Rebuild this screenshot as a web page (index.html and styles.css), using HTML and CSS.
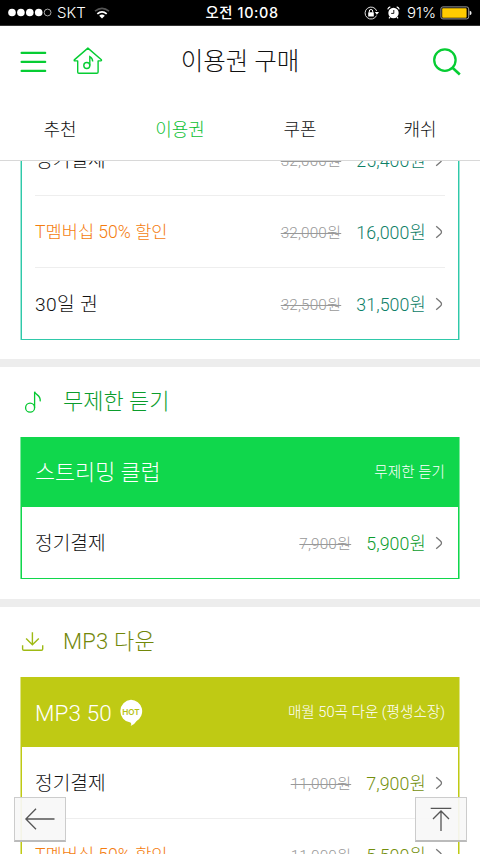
FILE: index.html
```html
<!DOCTYPE html>
<html lang="ko">
<head>
<meta charset="utf-8">
<meta name="viewport" content="width=device-width, initial-scale=1">
<title>이용권 구매</title>
<link rel="stylesheet" href="styles.css">
</head>
<body>
<svg class="defs" width="0" height="0" aria-hidden="true">
  <symbol id="chevron" viewBox="0 0 8 14"><path d="M1.2 1.2 L5.2 4.7 Q7.8 7 5.2 9.3 L1.2 12.8" fill="none" stroke="#777" stroke-width="1.3"/></symbol>
</svg>
<div class="screen">
  <div class="status">
    <div class="status-left">
      <svg width="45" height="9" viewBox="0 0 45 9"><g fill="#fff"><circle cx="4" cy="4.5" r="3.8"/><circle cx="12.9" cy="4.5" r="3.8"/><circle cx="21.8" cy="4.5" r="3.8"/><circle cx="30.7" cy="4.5" r="3.8"/></g><circle cx="39.6" cy="4.5" r="3.4" fill="none" stroke="#ccc" stroke-width=".8"/></svg>
      <span class="carrier">SKT</span>
      <svg class="wifi" width="16" height="12" viewBox="0 0 16 12"><path d="M1 4.2 Q8 -1.6 15 4.2" fill="none" stroke="#555" stroke-width="1.7"/><path d="M3.3 6.9 Q8 2.8 12.7 6.9" fill="none" stroke="#fff" stroke-width="1.8"/><path d="M5.2 8.7 Q8 6.3 10.8 8.7 L8 11.6Z" fill="#fff"/></svg>
    </div>
    <div class="clock">오전 10:08</div>
    <div class="status-right">
      <svg width="15" height="14" viewBox="0 0 15 14"><path d="M12.5 9.6 A6 6 0 1 1 12.7 5" fill="none" stroke="#ddd" stroke-width="1"/><path d="M10.8 6 H15 L12.9 8.8Z" fill="#fff"/><rect x="4.2" y="6.2" width="5.6" height="4.3" rx=".5" fill="#fff"/><path d="M5.3 6.4 V5 Q5.3 3.5 7 3.5 T8.7 5 V6.4" fill="none" stroke="#fff" stroke-width="1"/></svg>
      <svg class="alarm" width="13" height="13" viewBox="0 0 13 13"><circle cx="6.5" cy="7" r="5.2" fill="#fff"/><path d="M.7 3.4 Q1.4 1.4 3.3 .9 M12.3 3.4 Q11.6 1.4 9.7 .9 M3 11 L2 12.4 M10 11 L11 12.4" fill="none" stroke="#fff" stroke-width="1.2"/><path d="M6.8 4 V7.4 H4.2" fill="none" stroke="#000" stroke-width=".9"/></svg>
      <span class="percent">91%</span>
      <svg class="battery" width="32" height="14" viewBox="0 0 32 14"><rect x=".9" y=".9" width="27.8" height="12" rx="2" fill="#000" stroke="#999" stroke-width="1"/><rect x="2.2" y="2.2" width="24.4" height="9.6" rx=".8" fill="#fc0"/><path d="M29.7 4.7 Q31.6 5 31.6 7 T29.7 9.3Z" fill="#eee"/></svg>
    </div>
  </div>

  <header class="header">
    <div class="header-left">
      <svg width="27" height="22" viewBox="0 0 27 22"><path d="M1.6 1.9H25.2M1.6 10.9H25.2M1.6 19.9H25.2" stroke="#06cd33" stroke-width="2.2" stroke-linecap="round"/></svg>
      <svg class="home" width="30" height="28" viewBox="0 0 30 28"><path d="M14.9 1.1 L28.4 12.7 Q28.8 13.8 27.8 13.9 H25.1 V25 Q25.1 26.3 23.8 26.3 H5.9 Q4.7 26.3 4.7 25 V13.9 H1.8 Q.9 13.8 1.3 12.9Z" fill="none" stroke="#06cd33" stroke-width="1.4" stroke-linejoin="round"/><circle cx="13.8" cy="18.5" r="3" fill="none" stroke="#06cd33" stroke-width="1.4"/><path d="M16.8 18.5 V9.6 Q19.6 11.2 19.7 14.5" fill="none" stroke="#06cd33" stroke-width="1.4"/></svg>
    </div>
    <h1 class="title">이용권 구매</h1>
    <svg class="search" width="29" height="28" viewBox="0 0 29 28"><circle cx="12.9" cy="12.1" r="10.7" fill="none" stroke="#06cd33" stroke-width="2.3"/><path d="M20.5 19.7 L27.8 26.5" stroke="#06cd33" stroke-width="2.6"/></svg>
  </header>

  <nav class="tabs">
    <a class="tab">추천</a><a class="tab active">이용권</a><a class="tab">쿠폰</a><a class="tab">캐쉬</a>
  </nav>

  <main class="content">
    <section class="section teal scrolled">
      <div class="card">
        <div class="rows">
          <div class="row"><span class="name">정기결제</span><s class="old">32,000원</s><span class="price">25,400원</span><svg class="chev"><use href="#chevron"/></svg></div>
          <div class="row"><span class="name promo">T멤버십 50% 할인</span><s class="old">32,000원</s><span class="price">16,000원</span><svg class="chev"><use href="#chevron"/></svg></div>
          <div class="row"><span class="name period">30일 권</span><s class="old">32,500원</s><span class="price">31,500원</span><svg class="chev"><use href="#chevron"/></svg></div>
        </div>
      </div>
    </section>

    <section class="section green">
      <h2 class="heading">
        <svg width="24" height="26" viewBox="0 0 24 26"><circle cx="10.1" cy="18.7" r="4.5" fill="none" stroke="#06c832" stroke-width="1.3"/><path d="M14.6 18.7 V2.7 C15.3 6.1 21 5.9 20.2 12.4" fill="none" stroke="#06c832" stroke-width="1.3"/></svg>
        <span>무제한 듣기</span>
      </h2>
      <div class="card">
        <div class="card-head"><span class="card-title">스트리밍 클럽</span><span class="card-note">무제한 듣기</span></div>
        <div class="rows">
          <div class="row"><span class="name">정기결제</span><s class="old">7,900원</s><span class="price">5,900원</span><svg class="chev"><use href="#chevron"/></svg></div>
        </div>
      </div>
    </section>

    <section class="section lime">
      <h2 class="heading">
        <svg width="24" height="26" viewBox="0 0 24 26"><path d="M12.4 3.2 V15.6 M6.1 9.4 L12.4 15.8 L18.8 9.4 M2.6 16.2 V20 Q2.6 21.3 3.9 21.3 H21.4 Q22.7 21.3 22.7 20 V16.2" fill="none" stroke="#9fba14" stroke-width="1.4"/></svg>
        <span class="spaced">MP3 다운</span>
      </h2>
      <div class="card">
        <div class="card-head"><span class="card-title plan">MP3 50</span>
          <svg class="hot" width="24" height="28" viewBox="0 0 24 28"><path d="M12 .8 A11.4 11.4 0 0 1 17.6 22 Q15.5 25.6 11.6 27 Q13 25 11.4 23.5 A11.4 11.4 0 0 1 12 .8Z" fill="#fff"/><text class="hot-text" x="12" y="15.7" text-anchor="middle">HOT</text></svg>
          <span class="card-note">매월 50곡 다운 (평생소장)</span></div>
        <div class="rows">
          <div class="row"><span class="name">정기결제</span><s class="old">11,000원</s><span class="price">7,900원</span><svg class="chev"><use href="#chevron"/></svg></div>
          <div class="row"><span class="name promo">T멤버십 50% 할인</span><s class="old">11,000원</s><span class="price">5,500원</span><svg class="chev"><use href="#chevron"/></svg></div>
        </div>
      </div>
    </section>
  </main>

  <button class="float back" aria-label="뒤로"><svg width="32" height="24" viewBox="0 0 32 24"><path d="M30.5 12 H2 M12 1.8 L1.9 12 L12 22.2" fill="none" stroke="#555" stroke-width="1.3"/></svg></button>
  <button class="float top" aria-label="맨 위로"><svg width="24" height="26" viewBox="0 0 24 26"><path d="M1.7 2.3 H22.3 M12 25 V5 M4 13 L12 5 L20 13" fill="none" stroke="#555" stroke-width="1.3"/></svg></button>
</div>
</body>
</html>
```
FILE: styles.css
```css
* { box-sizing: border-box; }
body { margin: 0; background: #fff; }
svg { display: block; flex: none; }
.defs { position: absolute; }

.screen {
  position: relative;
  width: 480px;
  height: 854px;
  overflow: hidden;
  display: flex;
  flex-direction: column;
  font-family: Roboto, "Noto Sans CJK KR", sans-serif;
  font-weight: 300;
  color: #111;
  white-space: nowrap;
}

.status {
  flex: none;
  height: 26px;
  padding: 0 8px;
  display: grid;
  grid-template-columns: 1fr auto 1fr;
  align-items: center;
  background: #000;
  border-bottom: 1px solid #333;
  color: #fff;
  font-family: Inter, "Noto Sans CJK KR", sans-serif;
  font-size: 15px;
  line-height: 25px;
}
.status-left, .status-right { display: flex; align-items: center; }
.status-right { justify-content: flex-end; }
.carrier { margin-left: 4px; }
.wifi { margin-left: 8px; }
.clock { margin-left: 4px; font-size: 14.4px; font-weight: 500; letter-spacing: .6px; }
.alarm { margin-left: 8px; }
.percent { margin: 0 4px 0 7px; font-size: 15px; }

.header {
  flex: none;
  height: 72px;
  padding: 0 19px 0 20px;
  display: grid;
  grid-template-columns: 1fr auto 1fr;
  align-items: center;
}
.header-left { display: flex; align-items: center; }
.home { margin-left: 26px; margin-top: -2px; }
.title { margin: 0 1px 0 0; font-size: 24.5px; font-weight: 300; line-height: 36px; }
.search { justify-self: end; }

.tabs {
  flex: none;
  height: 63px;
  padding-top: 1px;
  display: grid;
  grid-template-columns: repeat(4, 1fr);
  align-items: center;
  text-align: center;
  border-bottom: 1px solid #d8d8d8;
  font-size: 18px;
  line-height: 26px;
}
.tab.active { color: #0fbf35; }

.content { flex: 1; min-height: 0; overflow: hidden; }
.section { padding: 0 21px 20px; border-bottom: 8px solid #ededed; }
.scrolled { padding-bottom: 19px; }
.scrolled .card { margin-top: -38px; }

.teal { --line: #2fc9a9; --soft: #9fe6d8; --price: #0e8067; }
.green { --line: #10d74c; --soft: #7ee99e; --price: #0b9c2c; --head: #0b9c2c; }
.lime { --line: #bfca14; --soft: #dee386; --price: #748f0c; --head: #728709; }

.heading {
  margin: 0;
  height: 70px;
  display: flex;
  align-items: center;
  gap: 19px;
  margin-left: -1px;
  color: var(--head);
  font-size: 22px;
  font-weight: 300;
  line-height: 32px;
}
.spaced { letter-spacing: .2px; }
.card {
  border: 1px solid var(--line);
  box-shadow: -1px 0 var(--soft), 1px 0 var(--soft);
}
.card-head {
  height: 69px;
  padding: 0 13px;
  display: flex;
  align-items: center;
  background: var(--line);
  color: #fff;
}
.card-title { font-size: 21.8px; line-height: 32px; }
.plan { font-size: 22.5px; letter-spacing: .1px; }
.card-note { margin-left: auto; font-size: 14.6px; line-height: 20px; padding-bottom: 2px; }
.hot { margin-left: 7px; }
.hot-text { font: 600 8.2px Inter, sans-serif; fill: #b6c213; }

.rows { padding: 0 13px; }
.row { height: 71px; padding-bottom: 2px; display: flex; align-items: center; }
.row + .row { height: 72px; border-top: 1px solid #eee; }
.name { margin-right: auto; font-size: 19.2px; }
.promo { font-size: 17.6px; color: #f47d10; }
.period { letter-spacing: .4px; }
.old { color: #999; font-size: 15.3px; letter-spacing: .15px; }
.price { margin-left: 15px; color: var(--price); font-size: 17.8px; letter-spacing: .1px; }
.chev { width: 8px; height: 14px; margin: 2px 2px 0 9px; }

.float {
  position: absolute;
  top: 797px;
  width: 52px;
  height: 45px;
  padding: 0;
  display: flex;
  align-items: center;
  justify-content: center;
  background: rgba(248, 248, 248, .93);
  border: 1px solid #ccc;
  border-bottom: 2px solid #bbb;
}
.back { left: 14px; }
.top { left: 415px; }
```
